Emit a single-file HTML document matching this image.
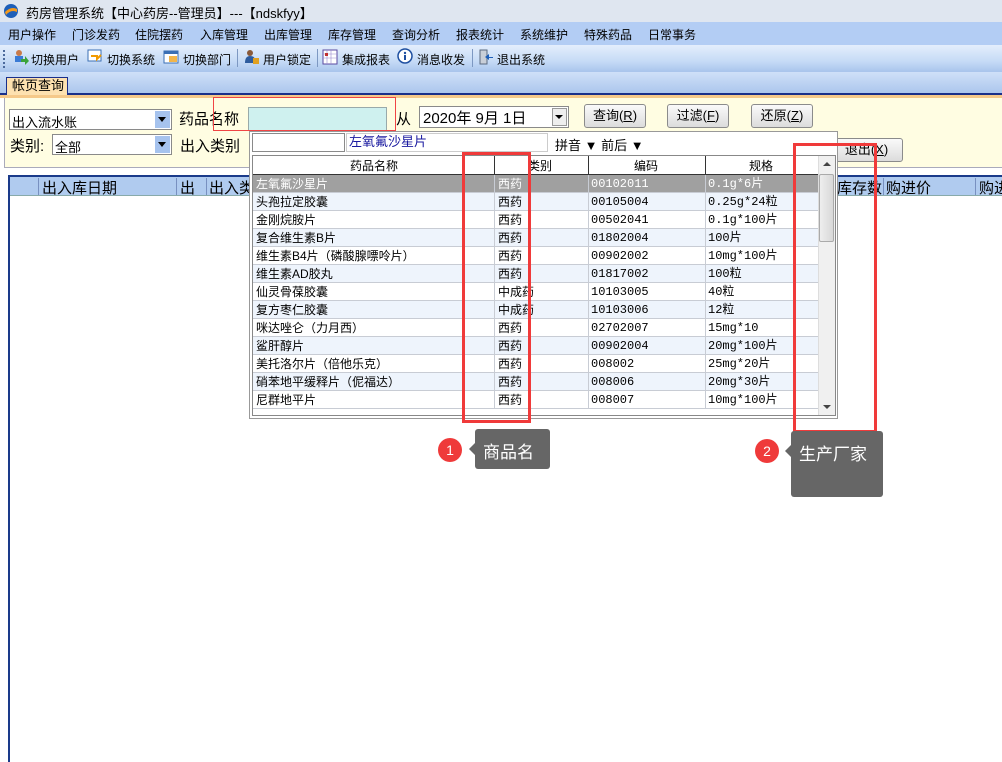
<!DOCTYPE html>
<html><head><meta charset="utf-8"><style>
*{margin:0;padding:0;box-sizing:border-box}
body{width:1002px;height:762px;position:relative;overflow:hidden;background:#fff;font-family:"Liberation Sans","Noto Sans CJK SC","WenQuanYi Zen Hei",sans-serif;font-size:12px;color:#000}
.a{position:absolute;white-space:nowrap}
.inp{position:absolute;background:#fff;border:1px solid #8a8a8a}
.dd{position:absolute;width:15px;height:17px;background:#a6c3ee}
.dd:after{content:"";position:absolute;left:3px;top:6px;border:4px solid transparent;border-top:5px solid #000}
.btn{position:absolute;height:24px;border:1px solid #8b8b8b;border-radius:3px;background:linear-gradient(#fafafa,#dcdcdc);text-align:center;line-height:22px;font-size:13px}
.row{position:absolute;left:253px;width:565px;height:18px;border-bottom:1px solid #c8ccd4;font-size:12px;line-height:18px}
.row span{position:absolute;top:0}
.row span.m{font-family:"Liberation Mono","Noto Sans CJK SC",monospace;font-size:12px}
.red{position:absolute;border:3px solid #f03a3a}
.tip{position:absolute;background:#666;color:#fff;font-size:17px;border-radius:3px;padding:9px 8px}
.tip:before{content:"";position:absolute;left:-6px;top:14px;border:6px solid transparent;border-left:0;border-right:6px solid #666}
.num{position:absolute;width:24px;height:24px;border-radius:12px;background:#ef3a3a;color:#fff;font-size:14px;text-align:center;line-height:24px}
</style></head><body>
<div class="a" style="left:0;top:0;width:1002px;height:22px;background:#dfe6f0"></div>
<svg class="a" style="left:3px;top:3px" width="16" height="16"><circle cx="8" cy="8" r="7" fill="#1e5fb8"/><path d="M2 9 Q8 3 14 6 L14 9 Q8 6 3 12Z" fill="#f39a1e"/></svg>
<div class="a" style="left:26px;top:3px;font-size:13px">药房管理系统【中心药房--管理员】---【ndskfyy】</div>
<div class="a" style="left:0;top:22px;width:1002px;height:23px;background:#b3cdf4"></div>
<div class="a" style="left:8px;top:26px">用户操作</div>
<div class="a" style="left:72px;top:26px">门诊发药</div>
<div class="a" style="left:135px;top:26px">住院摆药</div>
<div class="a" style="left:200px;top:26px">入库管理</div>
<div class="a" style="left:264px;top:26px">出库管理</div>
<div class="a" style="left:328px;top:26px">库存管理</div>
<div class="a" style="left:392px;top:26px">查询分析</div>
<div class="a" style="left:456px;top:26px">报表统计</div>
<div class="a" style="left:520px;top:26px">系统维护</div>
<div class="a" style="left:584px;top:26px">特殊药品</div>
<div class="a" style="left:648px;top:26px">日常事务</div>
<div class="a" style="left:0;top:45px;width:1002px;height:27px;background:linear-gradient(#e4eefc,#c6dbf6 60%,#a8c4ec)"></div>
<div class="a" style="left:3px;top:50px;width:2px;height:18px;border-left:2px dotted #4c6a9c"></div>
<svg class="a" style="left:13px;top:49px" width="16" height="16"><circle cx="6" cy="4" r="3" fill="#c87a4a"/><rect x="2" y="7" width="8" height="6" fill="#3a7bd5"/><path d="M8 10h4v-3l4 5-4 4v-3H8z" fill="#3aa33a"/></svg>
<div class="a" style="left:31px;top:51px">切换用户</div>
<svg class="a" style="left:87px;top:49px" width="16" height="16"><rect x="1" y="1" width="13" height="11" fill="#fff" stroke="#3a6fb5"/><path d="M4 7h6v3l4-4" stroke="#f29a00" stroke-width="2" fill="none"/></svg>
<div class="a" style="left:107px;top:51px">切换系统</div>
<svg class="a" style="left:163px;top:49px" width="16" height="16"><rect x="1" y="2" width="14" height="12" fill="#fff" stroke="#3a6fb5"/><rect x="6" y="7" width="8" height="6" fill="#f2b54a"/><rect x="1" y="2" width="14" height="3" fill="#3a6fb5"/></svg>
<div class="a" style="left:183px;top:51px">切换部门</div>
<div class="a" style="left:237px;top:49px;width:1px;height:18px;background:#7d98c2"></div>
<svg class="a" style="left:244px;top:49px" width="16" height="16"><circle cx="6" cy="4" r="3" fill="#8a5a3a"/><path d="M1 14q0-7 5-7t5 4v3z" fill="#2e5c9e"/><rect x="9" y="9" width="6" height="6" fill="#e0a020"/></svg>
<div class="a" style="left:263px;top:51px">用户锁定</div>
<div class="a" style="left:317px;top:49px;width:1px;height:18px;background:#7d98c2"></div>
<svg class="a" style="left:322px;top:49px" width="16" height="16"><rect x="1" y="1" width="14" height="14" fill="#fff" stroke="#5a4aa0"/><path d="M1 5h14M1 9h14M5 1v14M9 1v14" stroke="#9a8ad0" stroke-width=".6"/><rect x="3" y="4" width="3" height="3" fill="#c03030"/></svg>
<div class="a" style="left:342px;top:51px">集成报表</div>
<svg class="a" style="left:397px;top:48px" width="16" height="18"><ellipse cx="8" cy="8" rx="7" ry="7" fill="#fff" stroke="#1e4fa0" stroke-width="1.5"/><rect x="7" y="7" width="2" height="5" fill="#1e4fa0"/><circle cx="8" cy="5" r="1.2" fill="#1e4fa0"/></svg>
<div class="a" style="left:417px;top:51px">消息收发</div>
<div class="a" style="left:472px;top:49px;width:1px;height:18px;background:#7d98c2"></div>
<svg class="a" style="left:478px;top:49px" width="16" height="16"><rect x="2" y="1" width="7" height="14" fill="#c9cfd8" stroke="#5a6a80"/><path d="M15 8h-4v-3l-4 3 4 3v-2h4z" fill="#1e5fb8"/></svg>
<div class="a" style="left:497px;top:51px">退出系统</div>
<div class="a" style="left:0;top:72px;width:1002px;height:23px;background:linear-gradient(#cfe0f8,#a9c4ec)"></div>
<div class="a" style="left:0;top:93px;width:1002px;height:2px;background:#1a2f8a"></div>
<div class="a" style="left:6px;top:77px;width:62px;height:18px;background:#fde1b0;border:1px solid #1a2f8a;border-bottom:none;font-size:13px;line-height:16px;padding-left:5px">帐页查询</div>
<div class="a" style="left:0;top:95px;width:1002px;height:3px;background:#f5c98a"></div>
<div class="a" style="left:4px;top:98px;width:998px;height:70px;background:#fffde2;border-left:1px solid #aab;border-bottom:1px solid #aab"></div>
<div class="inp" style="left:9px;top:109px;width:163px;height:21px;font-size:13px;padding:2px 2px">出入流水账</div><div class="dd" style="left:155px;top:111px"></div>
<div class="a" style="left:179px;top:108px;font-size:15px">药品名称</div>
<div class="a" style="left:248px;top:107px;width:139px;height:24px;background:#cff1ef;border:1px solid #9aa"></div>
<div class="a" style="left:396px;top:108px;font-size:15px">从</div>
<div class="inp" style="left:419px;top:106px;width:150px;height:22px;font-size:15px;padding:0 3px">2020年 9月 1日</div>
<div class="a" style="left:552px;top:108px;width:15px;height:18px;background:#eee;border:1px solid #999"></div>
<div class="a" style="left:555px;top:115px;border:4px solid transparent;border-top:4px solid #000"></div>
<div class="btn" style="left:584px;top:104px;width:62px">查询(<u>R</u>)</div>
<div class="btn" style="left:667px;top:104px;width:62px">过滤(<u>F</u>)</div>
<div class="btn" style="left:751px;top:104px;width:62px">还原(<u>Z</u>)</div>
<div class="btn" style="left:830px;top:138px;width:73px">退出(<u>X</u>)</div>
<div class="a" style="left:10px;top:135px;font-size:15px">类别:</div>
<div class="inp" style="left:52px;top:134px;width:120px;height:21px;font-size:13px;padding:2px 2px">全部</div><div class="dd" style="left:155px;top:136px"></div>
<div class="a" style="left:180px;top:135px;font-size:15px">出入类别</div>
<div class="a" style="left:8px;top:175px;width:994px;height:587px;border-left:2px solid #1a3a8a;border-top:2px solid #1a3a8a;background:#fff"></div>
<div class="a" style="left:10px;top:177px;width:992px;height:19px;background:#b0cbef;border-bottom:1px solid #8aa"></div>
<div class="a" style="left:38px;top:178px;width:1px;height:17px;background:#7890c0"></div>
<div class="a" style="left:42px;top:177px;font-size:15px">出入库日期</div>
<div class="a" style="left:176px;top:178px;width:1px;height:17px;background:#7890c0"></div>
<div class="a" style="left:180px;top:177px;font-size:15px">出</div>
<div class="a" style="left:206px;top:178px;width:1px;height:17px;background:#7890c0"></div>
<div class="a" style="left:209px;top:177px;font-size:15px">出入类</div>
<div class="a" style="left:838px;top:177px;font-size:15px;width:44px;overflow:hidden;direction:rtl">库存数</div>
<div class="a" style="left:883px;top:178px;width:1px;height:17px;background:#7890c0"></div>
<div class="a" style="left:886px;top:177px;font-size:15px">购进价</div>
<div class="a" style="left:975px;top:178px;width:1px;height:17px;background:#7890c0"></div>
<div class="a" style="left:979px;top:177px;font-size:15px">购进</div>
<div class="a" style="left:249px;top:131px;width:589px;height:288px;background:#fff;border:1px solid #999"></div>
<div class="inp" style="left:252px;top:133px;width:93px;height:19px"></div>
<div class="inp" style="left:346px;top:133px;width:202px;height:19px;border-color:#ccc;color:#1a1aa0;font-size:13px;padding-left:2px;line-height:15px">左氧氟沙星片</div>
<div class="a" style="left:555px;top:135px;font-size:13px">拼音 ▼ 前后 ▼</div>
<div class="a" style="left:252px;top:155px;width:584px;height:261px;border:1px solid #888;background:#fff"></div>
<div class="a" style="left:253px;top:156px;width:565px;height:19px;background:#fff;border-bottom:1px solid #333"></div>
<div class="a" style="left:494px;top:156px;width:1px;height:19px;background:#333"></div>
<div class="a" style="left:588px;top:156px;width:1px;height:19px;background:#333"></div>
<div class="a" style="left:705px;top:156px;width:1px;height:19px;background:#333"></div>
<div class="a" style="left:350px;top:157px">药品名称</div>
<div class="a" style="left:528px;top:157px">类别</div>
<div class="a" style="left:634px;top:157px">编码</div>
<div class="a" style="left:749px;top:157px">规格</div>
<div class="a" style="left:818px;top:156px;width:17px;height:259px;background:#f0f0f0;border-left:1px solid #ddd"></div>
<div class="a" style="left:823px;top:162px;border:4px solid transparent;border-bottom:4px solid #444;border-top:0"></div>
<div class="a" style="left:823px;top:405px;border:4px solid transparent;border-top:4px solid #444;border-bottom:0"></div>
<div class="a" style="left:819px;top:174px;width:15px;height:68px;background:linear-gradient(90deg,#eee,#d8d8d8);border:1px solid #aaa;border-radius:2px"></div>
<div class="row" style="top:175px;background:#a0a0a0;color:#fff"><span style="left:3px">左氧氟沙星片</span><span style="left:245px">西药</span><span class="m" style="left:338px">00102011</span><span class="m" style="left:455px">0.1g*6片</span></div>
<div class="row" style="top:193px;background:#eef4fc"><span style="left:3px">头孢拉定胶囊</span><span style="left:245px">西药</span><span class="m" style="left:338px">00105004</span><span class="m" style="left:455px">0.25g*24粒</span></div>
<div class="row" style="top:211px"><span style="left:3px">金刚烷胺片</span><span style="left:245px">西药</span><span class="m" style="left:338px">00502041</span><span class="m" style="left:455px">0.1g*100片</span></div>
<div class="row" style="top:229px;background:#eef4fc"><span style="left:3px">复合维生素B片</span><span style="left:245px">西药</span><span class="m" style="left:338px">01802004</span><span class="m" style="left:455px">100片</span></div>
<div class="row" style="top:247px"><span style="left:3px">维生素B4片（磷酸腺嘌呤片）</span><span style="left:245px">西药</span><span class="m" style="left:338px">00902002</span><span class="m" style="left:455px">10mg*100片</span></div>
<div class="row" style="top:265px;background:#eef4fc"><span style="left:3px">维生素AD胶丸</span><span style="left:245px">西药</span><span class="m" style="left:338px">01817002</span><span class="m" style="left:455px">100粒</span></div>
<div class="row" style="top:283px"><span style="left:3px">仙灵骨葆胶囊</span><span style="left:245px">中成药</span><span class="m" style="left:338px">10103005</span><span class="m" style="left:455px">40粒</span></div>
<div class="row" style="top:301px;background:#eef4fc"><span style="left:3px">复方枣仁胶囊</span><span style="left:245px">中成药</span><span class="m" style="left:338px">10103006</span><span class="m" style="left:455px">12粒</span></div>
<div class="row" style="top:319px"><span style="left:3px">咪达唑仑（力月西）</span><span style="left:245px">西药</span><span class="m" style="left:338px">02702007</span><span class="m" style="left:455px">15mg*10</span></div>
<div class="row" style="top:337px;background:#eef4fc"><span style="left:3px">鲨肝醇片</span><span style="left:245px">西药</span><span class="m" style="left:338px">00902004</span><span class="m" style="left:455px">20mg*100片</span></div>
<div class="row" style="top:355px"><span style="left:3px">美托洛尔片（倍他乐克）</span><span style="left:245px">西药</span><span class="m" style="left:338px">008002</span><span class="m" style="left:455px">25mg*20片</span></div>
<div class="row" style="top:373px;background:#eef4fc"><span style="left:3px">硝苯地平缓释片（伲福达）</span><span style="left:245px">西药</span><span class="m" style="left:338px">008006</span><span class="m" style="left:455px">20mg*30片</span></div>
<div class="row" style="top:391px"><span style="left:3px">尼群地平片</span><span style="left:245px">西药</span><span class="m" style="left:338px">008007</span><span class="m" style="left:455px">10mg*100片</span></div>
<div class="a" style="left:494px;top:175px;width:1px;height:234px;background:#c8ccd4"></div>
<div class="a" style="left:588px;top:175px;width:1px;height:234px;background:#c8ccd4"></div>
<div class="a" style="left:705px;top:175px;width:1px;height:234px;background:#c8ccd4"></div>
<div class="a" style="left:213px;top:97px;width:183px;height:34px;border:1px solid #f04545"></div>
<div class="red" style="left:462px;top:152px;width:69px;height:271px"></div>
<div class="red" style="left:793px;top:143px;width:84px;height:290px"></div>
<div class="num" style="left:438px;top:438px">1</div>
<div class="tip" style="left:475px;top:429px;width:75px;height:40px">商品名</div>
<div class="num" style="left:755px;top:439px">2</div>
<div class="tip" style="left:791px;top:431px;width:92px;height:66px">生产厂家</div>
</body></html>
